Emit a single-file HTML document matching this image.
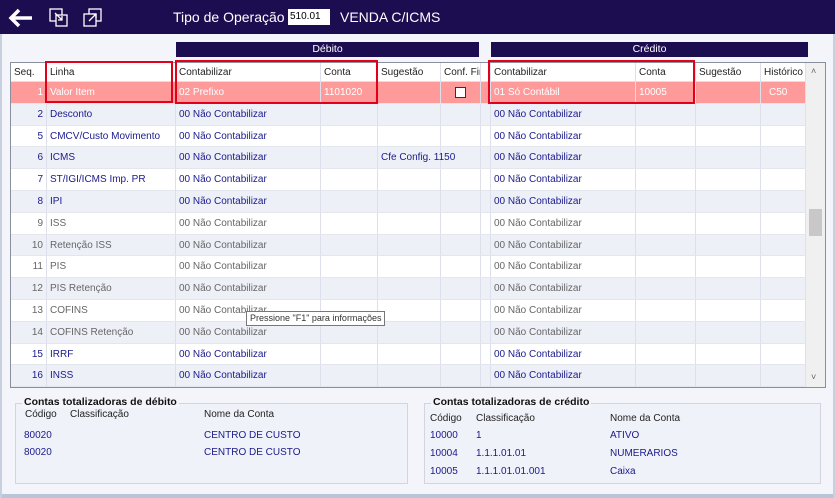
<!DOCTYPE html>
<html><head><meta charset="utf-8"><style>
*{margin:0;padding:0;box-sizing:border-box}
body{width:835px;height:498px;background:#f4f5fa;font-family:"Liberation Sans",Tahoma,sans-serif;font-size:10px;position:relative;overflow:hidden;color:#222}
.hdr{position:absolute;left:0;top:0;width:835px;height:34px;background:#1c0c50;color:#fff}
.abs{position:absolute;white-space:nowrap}
.bar{position:absolute;top:42px;height:15px;background:#1c0c50;color:#fff;text-align:center;font-size:10.5px;line-height:15px}
.grid{position:absolute;left:10px;top:62px;width:816px;height:326px;border:1px solid #8a8f9c;background:#fff;overflow:hidden}
.row{position:absolute;left:0;width:795px;height:21.8px;line-height:21px}
.c{position:absolute;top:0;height:100%;border-right:1px solid #dde0ea;padding-left:3px;white-space:nowrap}
.o{overflow:hidden}
.red{position:absolute;border:2px solid #e3001b}
.fs{position:absolute;border:1px solid #d2d5df;background:#f0f2f9}
.lg{position:absolute;top:-8px;left:6px;background:#f4f5fa;font-weight:bold;font-size:10.5px;padding:0 2px;color:#111;white-space:nowrap}
.b{color:#1a1a8c}
</style></head><body>
<div class="hdr">
<svg class="abs" style="left:8px;top:8px" width="26" height="20" viewBox="0 0 26 20"><path d="M11 2 L3 10 L11 18 M3 10 H24" stroke="#fff" stroke-width="3.5" fill="none"/></svg>
<svg class="abs" style="left:49px;top:8px" width="20" height="20" viewBox="0 0 20 20" fill="none" stroke="#fff" stroke-width="1.3"><rect x="1" y="1" width="12" height="12"/><rect x="7" y="7" width="11" height="11" fill="#1c0c50"/><path d="M6 5 L13 12 M9 12 H13 V8"/></svg>
<svg class="abs" style="left:83px;top:8px" width="20" height="20" viewBox="0 0 20 20" fill="none" stroke="#fff" stroke-width="1.3"><rect x="6" y="1" width="12" height="12"/><rect x="1" y="6" width="12" height="12" fill="#1c0c50"/><path d="M6 13 L13 6 M9 6 H13 V10"/></svg>
<div class="abs" style="left:173px;top:9px;font-size:14px">Tipo de Operação</div>
<div class="abs" style="left:288px;top:9px;width:42px;height:16px;background:#fff;color:#000;font-size:10px;line-height:16px;padding-left:2px">510.01</div>
<div class="abs" style="left:340px;top:9px;font-size:14px">VENDA C/ICMS</div>
</div>
<div class="bar" style="left:176px;width:303px">Débito</div>
<div class="bar" style="left:491px;width:317px">Crédito</div>
<div class="grid">
<div class="row" style="top:0;height:19px;line-height:19px;background:#fff;border-bottom:1px solid #dde0ea">
<div class="c o" style="left:0;width:36px">Seq.</div><div class="c o" style="left:36px;width:129px">Linha</div><div class="c o" style="left:165px;width:145px">Contabilizar</div><div class="c o" style="left:310px;width:57px">Conta</div><div class="c o" style="left:367px;width:63px">Sugestão</div><div class="c o" style="left:430px;width:40px">Conf. Fin</div><div class="c" style="left:470px;width:10px"></div><div class="c o" style="left:480px;width:145px">Contabilizar</div><div class="c o" style="left:625px;width:60px">Conta</div><div class="c o" style="left:685px;width:65px">Sugestão</div><div class="c o" style="left:750px;width:45px">Histórico</div>
</div>
<div id="rows"></div>
<div class="abs" style="left:795px;top:0;width:20px;height:324px;background:#f0f0f0"></div>
<div class="abs" style="left:800px;top:3px;font-size:9px;color:#666">&#x2C4;</div>
<div class="abs" style="left:800px;top:309px;font-size:9px;color:#666">&#x2C5;</div>
<div class="abs" style="left:798px;top:146px;width:13px;height:27px;background:#c8c8c8"></div>
</div>
<script>
var d=[["1","Valor Item","02 Prefixo","1101020","","01 Só Contábil","10005","C50"],["2","Desconto"],["5","CMCV/Custo Movimento"],["6","ICMS","","","Cfe Config. 1150"],["7","ST/IGI/ICMS Imp. PR"],["8","IPI"],["9","ISS"],["10","Retenção ISS"],["11","PIS"],["12","PIS Retenção"],["13","COFINS"],["14","COFINS Retenção"],["15","IRRF"],["16","INSS"]];
var h="";d.forEach(function(r,i){var top=19+i*21.8;var sel=i==0;var bg=sel?"#ff9a9a":(i%2?"#eef0f8":"#fff");var col=sel?"#fff":(i>=6&&i<=11?"#666":"#1a1a8c");
var nc="00 Não Contabilizar";
h+='<div class="row" style="top:'+top+'px;background:'+bg+';color:'+col+';border-bottom:1px solid #e4e6ee">'+
'<div class="c" style="left:0;width:36px;text-align:right;padding-right:3px">'+r[0]+'</div><div class="c" style="left:36px;width:129px">'+r[1]+'</div><div class="c" style="left:165px;width:145px">'+(r[2]||nc)+'</div><div class="c" style="left:310px;width:57px">'+(r[3]||"")+'</div><div class="c" style="left:367px;width:63px">'+(r[4]||"")+'</div><div class="c" style="left:430px;width:40px">'+(sel?'<span style="display:inline-block;margin:5px 0 0 11px;width:11px;height:11px;background:#fff;border:1px solid #333"></span>':'')+'</div><div class="c" style="left:470px;width:10px"></div><div class="c" style="left:480px;width:145px">'+(r[5]||nc)+'</div><div class="c" style="left:625px;width:60px">'+(r[6]||"")+'</div><div class="c" style="left:685px;width:65px"></div><div class="c" style="left:750px;width:45px;padding-left:8px">'+(r[7]||"")+'</div></div>';});
document.getElementById("rows").innerHTML=h;
</script>
<div class="red" style="left:45px;top:61px;width:128px;height:42px"></div>
<div class="red" style="left:175px;top:60px;width:203px;height:44px"></div>
<div class="red" style="left:488px;top:60px;width:207px;height:44px"></div>
<div class="abs" style="left:246px;top:311px;width:139px;height:15px;background:#fff;border:1px solid #777;font-size:9px;line-height:13px;padding-left:3px;color:#333;overflow:hidden">Pressione "F1" para informações</div>
<div class="fs" style="left:15px;top:403px;width:393px;height:81px"><div class="lg">Contas totalizadoras de débito</div>
<div class="abs" style="left:9px;top:5px">Código</div><div class="abs" style="left:54px;top:5px">Classificação</div><div class="abs" style="left:188px;top:5px">Nome da Conta</div>
<div class="abs b" style="left:8px;top:26px">80020</div><div class="abs b" style="left:188px;top:26px">CENTRO DE CUSTO</div>
<div class="abs b" style="left:8px;top:43px">80020</div><div class="abs b" style="left:188px;top:43px">CENTRO DE CUSTO</div></div>
<div class="fs" style="left:424px;top:403px;width:397px;height:81px"><div class="lg">Contas totalizadoras de crédito</div>
<div class="abs" style="left:5px;top:9px">Código</div><div class="abs" style="left:51px;top:9px">Classificação</div><div class="abs" style="left:185px;top:9px">Nome da Conta</div>
<div class="abs b" style="left:5px;top:26px">10000</div><div class="abs b" style="left:51px;top:26px">1</div><div class="abs b" style="left:185px;top:26px">ATIVO</div>
<div class="abs b" style="left:5px;top:44px">10004</div><div class="abs b" style="left:51px;top:44px">1.1.1.01.01</div><div class="abs b" style="left:185px;top:44px">NUMERARIOS</div>
<div class="abs b" style="left:5px;top:62px">10005</div><div class="abs b" style="left:51px;top:62px">1.1.1.01.01.001</div><div class="abs b" style="left:185px;top:62px">Caixa</div></div>
<div class="abs" style="left:0;top:494px;width:835px;height:4px;background:#b8c4d8"></div>
<div class="abs" style="left:0;top:34px;width:2px;height:464px;background:#c8d0e0"></div>
<div class="abs" style="left:833px;top:34px;width:2px;height:464px;background:#c8d0e0"></div>
</body></html>
